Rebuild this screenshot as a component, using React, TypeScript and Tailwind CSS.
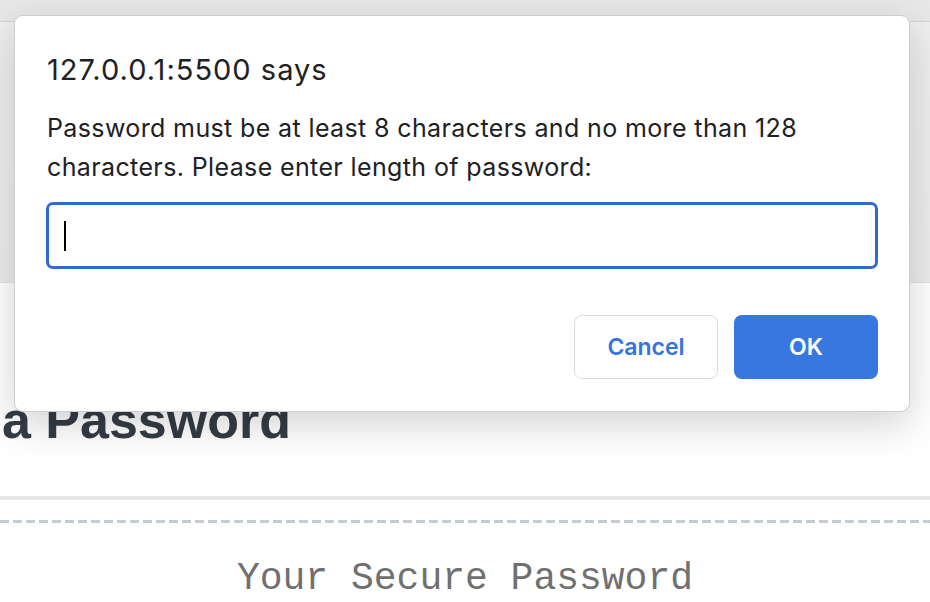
import React from 'react';

export default function App() {
  return (
    <div className="relative w-[930px] h-[602px] overflow-hidden bg-white font-['Inter',sans-serif]">
      {/* page behind the alert */}
      <div className="h-[22px] bg-[#e8e8e9] border-b border-[#d4d4d6]" />
      <div className="h-[261px] bg-gradient-to-b from-[#efeff0] to-[#ececed] border-b border-[#e2e2e2]" />
      <div className="bg-white">
        <div className="flex justify-end w-[291px] overflow-hidden mt-[106px]">
          <h1 className="whitespace-nowrap text-[52px] leading-[62px] font-bold text-[#343c45] font-['Liberation_Sans',Arial,sans-serif]">
            Generate a Password
          </h1>
        </div>
        <div className="mt-[45px] h-[4px] bg-[#e7e7e7]" />
        <div className="mt-[20px] h-[3px] bg-[repeating-linear-gradient(90deg,#c5cbd3_0px,#c5cbd3_9px,transparent_9px,transparent_13px)]" />
        <div className="mt-[34px] text-center text-[38px] leading-[44px] text-[#707070] font-['Liberation_Mono','Courier_New',monospace]">
          Your Secure Password
        </div>
      </div>

      {/* alert dialog */}
      <div className="absolute left-[14px] top-[15px] w-[896px] h-[397px] bg-white rounded-[9px] border border-[#cfcfcf] shadow-[0_12px_40px_rgba(0,0,0,0.18)] flex flex-col px-[31px]">
        <div className="pl-[1px] pt-[36px] text-[29px] leading-[36px] tracking-[0.035em] text-[#202124]">127.0.0.1:5500 says</div>
        <div className="pl-[1px] mt-[21px] text-[25px] leading-[39px] tracking-[0.015em] text-[#202124]">
          Password must be at least 8 characters and no more than 128 characters. Please enter length of password:
        </div>
        <div className="mt-[15px] h-[67px] rounded-[7px] border-[3px] border-[#2f6bcc] flex items-center pl-[15px]">
          <span className="w-[2px] h-[30px] bg-black" />
        </div>
        <div className="mt-[46px] flex justify-end gap-[16px]">
          <button className="w-[144px] h-[64px] rounded-[8px] border border-[#dadce0] bg-white text-[23px] font-semibold text-[#3574e0]">
            Cancel
          </button>
          <button className="w-[144px] h-[64px] rounded-[8px] bg-[#3876e0] text-[23px] font-semibold text-white">
            OK
          </button>
        </div>
      </div>
    </div>
  );
}
